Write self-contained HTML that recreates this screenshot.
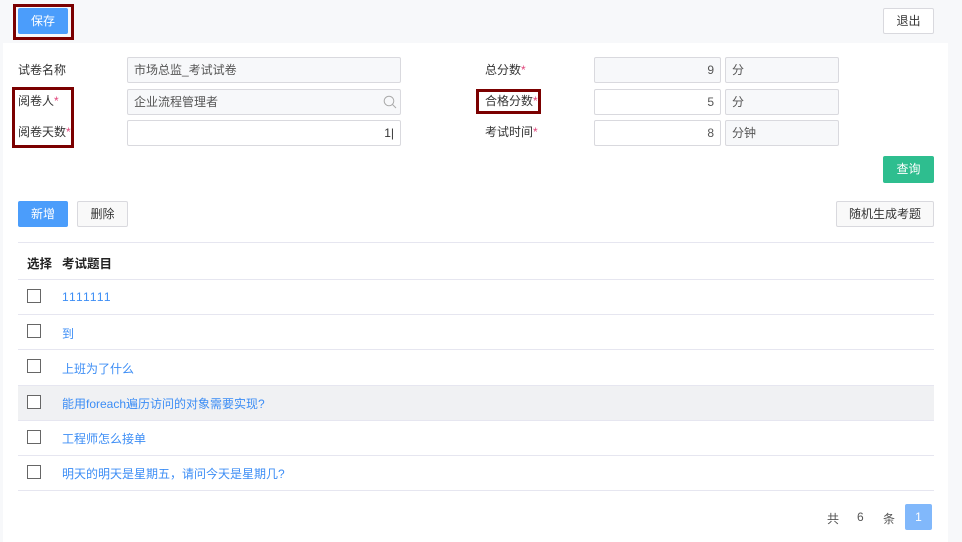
<!DOCTYPE html><html><head><meta charset="utf-8"><style>
*{box-sizing:border-box;margin:0;padding:0}
body{width:962px;height:542px;background:#f7f8fa;font-family:"Liberation Sans","Noto Sans CJK SC",sans-serif;font-size:12px;color:#333;position:relative;overflow:hidden}
.a{position:absolute}
.card{left:3px;top:43px;width:945px;height:499px;background:#fff}
.lbl{font-size:12px;color:#333;line-height:16px}
.st{color:#e0457b}
.inp{height:26px;border:1px solid #d9d9de;border-radius:2px;background:#f7f8fa;line-height:24px;padding:0 6px;color:#555}
.w{background:#fff}
.r{text-align:right}
.btn{height:26px;border-radius:2px;line-height:24px;text-align:center;font-size:12px}
.red{border:3px solid #7b0000}
.line{left:18px;width:916px;height:1px;background:#e6e6f0}
.cb{width:14px;height:14px;border:1px solid #666;background:#fff;left:27px}
.q{left:62px;color:#3c8df5;font-size:12px}
</style></head><body>
<div class="a red" style="left:13px;top:4px;width:61px;height:36px"></div>
<div class="a btn" style="left:18px;top:8px;width:50px;background:#4b9dfb;color:#fff;line-height:26px">保存</div>
<div class="a btn" style="left:883px;top:8px;width:51px;background:#fff;border:1px solid #d9d9de">退出</div>
<div class="a card"></div>
<div class="a lbl" style="left:18px;top:62px">试卷名称</div>
<div class="a lbl" style="left:18px;top:93px">阅卷人<span class="st">*</span></div>
<div class="a lbl" style="left:18px;top:124px">阅卷天数<span class="st">*</span></div>
<div class="a red" style="left:12px;top:87px;width:62px;height:61px"></div>
<div class="a inp" style="left:127px;top:57px;width:274px">市场总监_考试试卷</div>
<div class="a inp" style="left:127px;top:89px;width:274px">企业流程管理者</div>
<svg class="a" style="left:383px;top:95px" width="14" height="14" viewBox="0 0 14 14"><circle cx="6" cy="6" r="4.8" fill="none" stroke="#aaa" stroke-width="1"/><path d="M9.5 9.5L13 13" stroke="#aaa"/></svg>
<div class="a inp w r" style="left:127px;top:120px;width:274px;color:#333">1|</div>
<div class="a lbl" style="left:485px;top:62px">总分数<span class="st">*</span></div>
<div class="a lbl" style="left:485px;top:93px">合格分数<span class="st">*</span></div>
<div class="a red" style="left:476px;top:89px;width:65px;height:25px"></div>
<div class="a lbl" style="left:485px;top:124px">考试时间<span class="st">*</span></div>
<div class="a inp r" style="left:594px;top:57px;width:127px">9</div>
<div class="a inp w r" style="left:594px;top:89px;width:127px">5</div>
<div class="a inp w r" style="left:594px;top:120px;width:127px">8</div>
<div class="a inp" style="left:725px;top:57px;width:114px">分</div>
<div class="a inp" style="left:725px;top:89px;width:114px">分</div>
<div class="a inp" style="left:725px;top:120px;width:114px">分钟</div>
<div class="a btn" style="left:883px;top:156px;width:51px;height:27px;background:#2ebe8f;color:#fff;line-height:27px">查询</div>
<div class="a btn" style="left:18px;top:201px;width:50px;background:#4b9dfb;color:#fff;line-height:26px">新增</div>
<div class="a btn" style="left:77px;top:201px;width:51px;border:1px solid #d9d9de;background:#f9f9f9">删除</div>
<div class="a btn" style="left:836px;top:201px;width:98px;border:1px solid #d9d9de;background:#f9f9f9">随机生成考题</div>
<div class="a line" style="top:242px"></div>
<div class="a" style="left:27px;top:253px;font-weight:bold;font-size:12.5px;color:#222">选择</div>
<div class="a" style="left:62px;top:253px;font-weight:bold;font-size:12.5px;color:#222">考试题目</div>
<div class="a line" style="top:279px"></div>
<div class="a" style="left:18px;top:385px;width:916px;height:35px;background:#f0f1f3"></div>
<div class="a line" style="top:314px"></div><div class="a line" style="top:349px"></div><div class="a line" style="top:385px"></div><div class="a line" style="top:420px"></div><div class="a line" style="top:455px"></div><div class="a line" style="top:490px"></div>
<div class="a cb" style="top:289px"></div><div class="a q" style="top:290px;letter-spacing:1.2px">1111111</div>
<div class="a cb" style="top:324px"></div><div class="a q" style="top:325px">到</div>
<div class="a cb" style="top:359px"></div><div class="a q" style="top:360px">上班为了什么</div>
<div class="a cb" style="top:395px"></div><div class="a q" style="top:395px">能用foreach遍历访问的对象需要实现?</div>
<div class="a cb" style="top:430px"></div><div class="a q" style="top:430px">工程师怎么接单</div>
<div class="a cb" style="top:465px"></div><div class="a q" style="top:465px">明天的明天是星期五，请问今天是星期几?</div>
<div class="a" style="left:827px;top:510px;color:#555">共</div>
<div class="a" style="left:857px;top:510px;color:#555">6</div>
<div class="a" style="left:883px;top:510px;color:#555">条</div>
<div class="a" style="left:905px;top:504px;width:27px;height:26px;background:#81b8fb;color:#fff;text-align:center;line-height:26px;border-radius:2px">1</div>
</body></html>
